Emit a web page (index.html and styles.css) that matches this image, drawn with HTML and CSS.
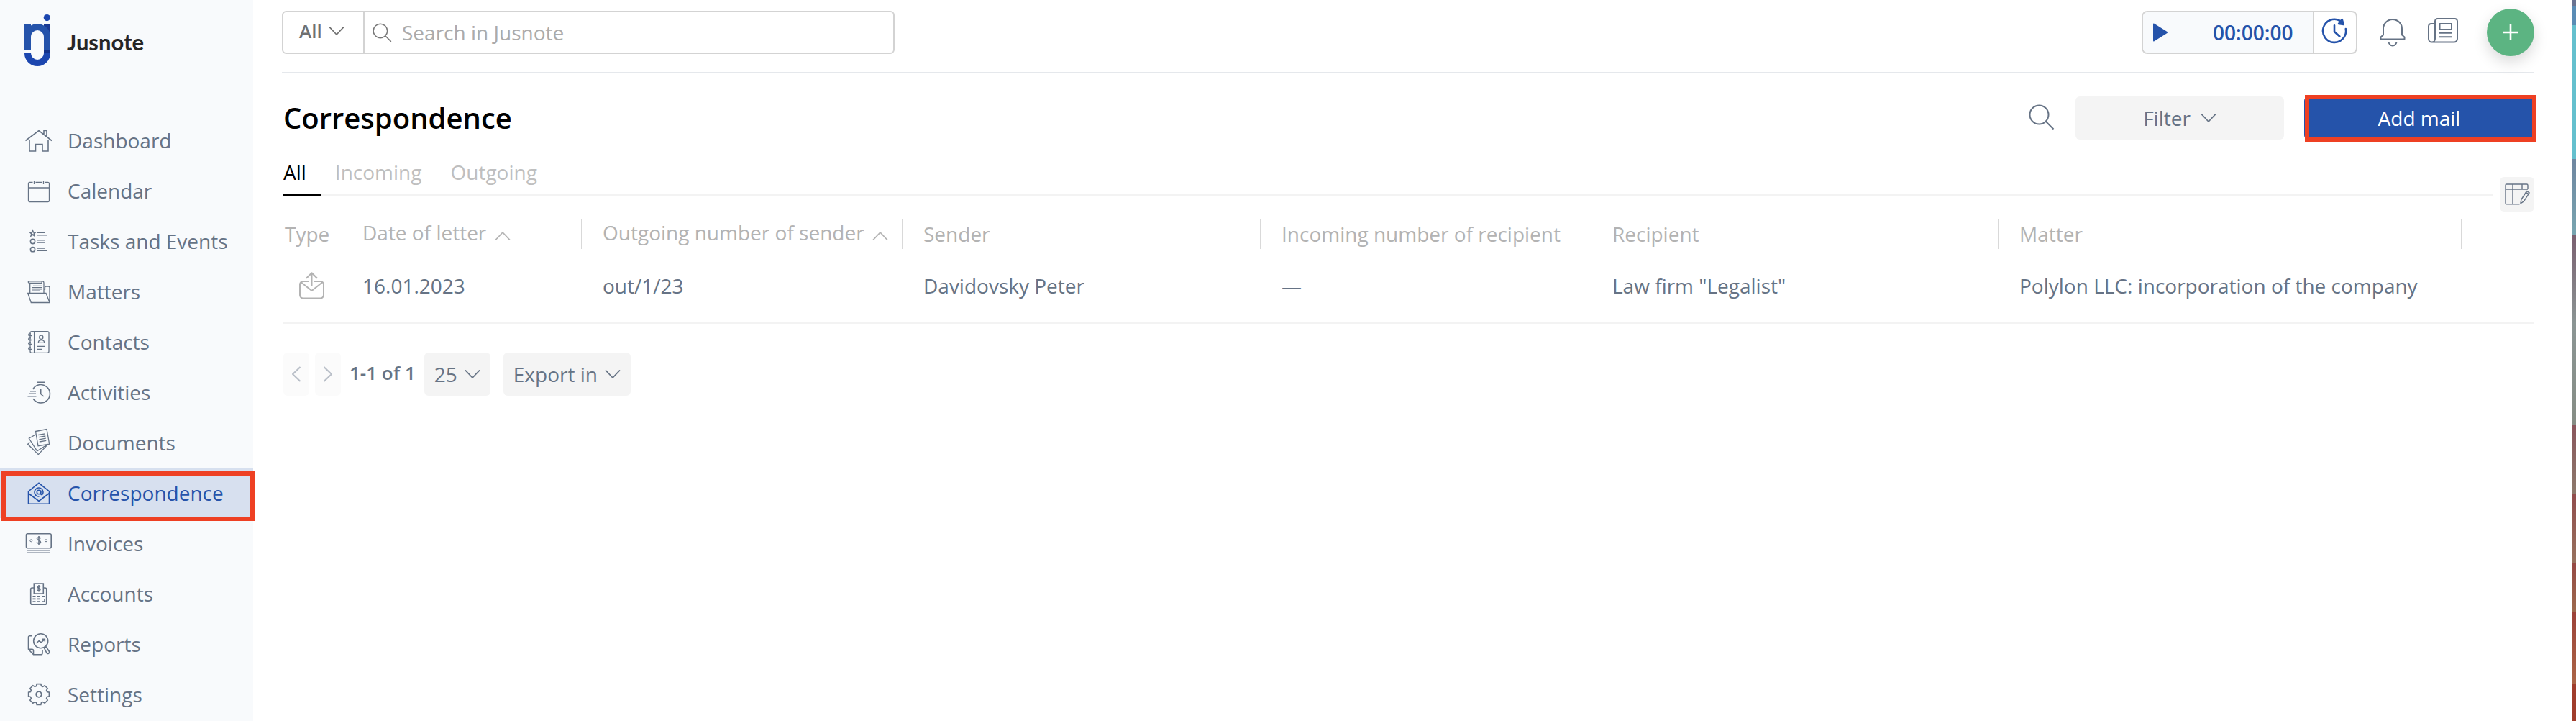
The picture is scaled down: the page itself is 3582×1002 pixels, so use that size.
FILE: index.html
```html
<!DOCTYPE html>
<html lang="en">

<head>
    <meta charset="UTF-8">
    <meta name="viewport" content="width=device-width, initial-scale=1.0">
    <title>Correspondence - Jusnote</title>
    <link rel="stylesheet" href="styles.css">
</head>

<body>
    <aside class="sidebar">
        <a class="logo">
            <svg class="logo-mark" viewBox="0 0 36 72">
                <circle cx="31.3" cy="4.6" r="4.6" fill="#1c46af" />
                <path d="M0 54h9a9 9 0 0 0 18 0v-4h9v4a18 18 0 0 1-36 0z" fill="#1c46af" />
                <path d="M27 13.5h9V50h-9z" fill="#2553aa" />
                <path d="M27 13.5h9V30a18 18 0 0 0-9-14z" fill="#1a3a94" />
                <path d="M0 13.5h9v2A18 18 0 0 1 36 31v19h-9V31a9 9 0 0 0-18 0v18.5H0z" fill="#2553aa" />
                <path d="M27 50h9v4h-9z" fill="#14328a" />
            </svg>
            <span class="logo-text">Jusnote</span>
        </a>
        <nav class="menu">
            <a class="menu-item">
                <svg viewBox="0 0 40 40"><path d="M1.5 20.5L20 6.5l18 14M7 19v16h8.5v-9.5H25V35h8V19M27 11V6.5h4V15" /></svg>
                Dashboard
            </a>
            <a class="menu-item">
                <svg class="thin" viewBox="0 0 40 40"><path d="M11.5 8.5h-4a2 2 0 0 0-2 2v23a2 2 0 0 0 2 2h25a2 2 0 0 0 2-2v-23a2 2 0 0 0-2-2h-4M15.5 8.5h9M5.5 16h29M13.5 6v5M26.5 6v5" /></svg>
                Calendar
            </a>
            <a class="menu-item">
                <svg viewBox="0 0 40 40"><path d="M11.5 5.5l1 2.5h2.7l-2 1.900.7 2.9-2.4-1.7-2.4 1.7.7-2.9-2-1.9h2.7zM18 8.300h10M18 11.700h14M18 18.700h10M18 22h10M18 30h10M18 33.300h14" /><circle cx="11.5" cy="20.5" r="3.1" /><circle cx="11.5" cy="31.7" r="3.1" /></svg>
                Tasks and Events
            </a>
            <a class="menu-item">
                <svg class="thin" viewBox="0 0 40 40"><path d="M7.7 22V8.500H24M7.7 8.500C5 8.500 4.500 6 6.500 5.800h18.700M24 8.500c0-3.600 3-3.600 3 0V22M4.700 22.300H30l5 13.200H9.300zM27 17h1.500v-2.500a1.500 1.500 0 0 1 1.500-1.500h3.500a1.500 1.500 0 0 1 1.500 1.500v21M12 12.300h12M10.300 14.600H24M10.300 16.900H24M10.300 19.100h11" /></svg>
                Matters
            </a>
            <a class="menu-item">
                <svg class="thin" viewBox="0 0 40 40"><rect x="8" y="5.7" width="26" height="29.6" rx="2" /><path d="M13.6 5.7v29.6M19.3 21.3c0-5 8.4-5 8.4 0zM17.7 26.3H29M17.7 30.3H25M11 11.500H7a1.300 1.300 0 0 1 0-2.700h2M11 17.500H7a1.300 1.300 0 0 1 0-2.700h2M11 23.500H7a1.300 1.300 0 0 1 0-2.700h2M11 30.500H7a1.300 1.300 0 0 1 0-2.700h2" /><circle cx="23.3" cy="13.7" r="2.6" /></svg>
                Contacts
            </a>
            <a class="menu-item">
                <svg viewBox="0 0 40 40"><path d="M11.7 16a12.7 12.7 0 1 1 .5 13.3M17 6.3h11M8 18.7h8M6.3 22.3H16M4.5 25.7h12M22.7 16v6.5l4 3.5" /></svg>
                Activities
            </a>
            <a class="menu-item">
                <svg class="thin" viewBox="0 0 40 40"><path d="M15.5 4.5l15.5-3 3.7 20.7L19 24.700zM19.300 9.500l9.500-1.700M19.800 12.700l9.500-1.700M20.300 15.800l9.500-1.700M20.800 19l9.500-1.700M15.500 9l-9.200 5.300 11.300 17.500L30 24M7 19l-2.300 3.300 14.600 14.300 11.700-12.300" /></svg>
                Documents
            </a>
            <a class="menu-item active">
                <svg viewBox="0 0 40 40"><path d="M5.5 18L20 6.3 34.5 18v17.3h-29zM5.5 20.5L20 31.5l14.5-11M22.7 16.5V21c0 2.5 3.3 2 3.3-2a6 6 0 1 0-5.5 6" /><circle cx="20" cy="19" r="2.7" /></svg>
                Correspondence
            </a>
            <a class="menu-item">
                <svg viewBox="0 0 40 40"><rect x="2.5" y="6.7" width="34.7" height="20" rx="2" /><path d="M3 29.8h33M3 33.3h33M22.5 13.3c-1-2-5-1.8-5 .5s5 2 5 4.5-4.5 2.5-5.3.3M20 10v12" /><circle cx="9.3" cy="16.3" r="1.5" stroke-width="1" /><circle cx="30" cy="16.3" r="1.5" stroke-width="1" /></svg>
                Invoices
            </a>
            <a class="menu-item">
                <svg viewBox="0 0 40 40"><path d="M13.3 12h-2.6a2 2 0 0 0-2 2v19.3a2 2 0 0 0 2 2h18a2 2 0 0 0 2-2V14a2 2 0 0 0-2-2h-2.3M13.3 6h13v14h-13zM22 10.5c-1-1.5-4-1.3-4 .5s4 1.4 4 3.2-3.3 2-4.2.3M20 8v9.5M11.5 23.7h4M18 23.7h4M24.5 23.7h4M11.5 27.4h4M18 27.4h4M11.5 31h4M18 31h4M28 27v4h-3.5" /></svg>
                Accounts
            </a>
            <a class="menu-item">
                <svg viewBox="0 0 40 40"><circle cx="22.7" cy="15.7" r="10" /><path d="M11 8.7H7.500a2 2 0 0 0-2 2v16.600l7 7.500h10.500a2 2 0 0 0 2-2V29M5.500 27.300h5a2 2 0 0 1 2 2v5.500M16.500 19l3.800-3.500 3 2.300 5-4.500M25 13.200h3.300v3.300M27.500 25.500l2.800-1.500 4.200 6.500c1 2-2 4-3.500 2z" /></svg>
                Reports
            </a>
            <a class="menu-item">
                <svg viewBox="-20 -20 40 40"><path d="M14.4-2.8V2.8L11.5 3.5 10.6 5.6 12.2 8.2 8.2 12.2 5.6 10.6 3.5 11.5 2.8 14.4H-2.8L-3.5 11.5-5.6 10.6-8.2 12.2-12.2 8.2-10.6 5.6-11.5 3.5-14.4 2.8V-2.8L-11.5-3.5-10.6-5.6-12.2-8.2-8.2-12.2-5.6-10.6-3.5-11.5-2.8-14.4H2.8L3.5-11.5 5.6-10.6 8.2-12.2 12.2-8.2 10.6-5.6 11.5-3.500z" /><circle r="3.8" stroke-width="1.8" /></svg>
                Settings
            </a>
        </nav>
    </aside>

    <main class="content">
        <header class="topbar">
            <div class="search">
                <div class="search-type">
                    All
                    <svg class="chevron" viewBox="0 0 22 12"><path d="M1 .5l10 10.5L21 .5" /></svg>
                </div>
                <div class="search-field">
                    <svg class="search-icon" viewBox="0 0 36 36"><circle cx="14.5" cy="14.5" r="13" /><path d="M24 24l10.5 10.5" /></svg>
                    <span>Search in Jusnote</span>
                </div>
            </div>
            <div class="tools">
                <div class="timer">
                    <div class="timer-main">
                        <svg class="play" viewBox="0 0 22 26"><path d="M1 1.500Q1 0 2.500.8L20.500 12q1.500 1 0 2L2.500 25.200Q1 26 1 24.500z" /></svg>
                        <span>00:00:00</span>
                    </div>
                    <div class="timer-history">
                        <svg viewBox="0 0 36 36"><path d="M33.8 15A16 16 0 1 1 26 4M18 10.300V19l7.300 6.500" /><path class="fill" d="M24 8l6.700 1-2-7z" /></svg>
                    </div>
                </div>
                <svg class="bell" viewBox="0 0 36 40"><path d="M1.500 29.500v-3l3.500-3V15a13 13 0 0 1 26 0v8.500l3.500 3v3zM12.500 33a5.500 5.500 0 0 0 11 0" /></svg>
                <svg class="news" viewBox="0 0 42 36"><path d="M10 8H4.500A3.500 3.500 0 0 0 1 11.500V29a4.500 4.500 0 0 0 4.500 4.500h31A4.500 4.500 0 0 0 41 29V4.500A3.500 3.500 0 0 0 37.500 1h-24A3.500 3.500 0 0 0 10 4.500V29a4.500 4.500 0 0 1-4.500 4.500M16.500 8h16.500v8H16.500zM15.500 20.700h18.500M15.500 26.200h18.500" /></svg>
                <button class="add-button">
                    <svg viewBox="0 0 24 24"><path d="M12 1v22M1 12h22" /></svg>
                </button>
            </div>
        </header>

        <div class="page-head">
            <h1>Correspondence</h1>
            <div class="actions">
                <svg class="find" viewBox="0 0 36 36"><circle cx="14.5" cy="14.5" r="13" /><path d="M24 24l10.5 10.5" /></svg>
                <button class="filter-button">
                    Filter
                    <svg class="chevron" viewBox="0 0 22 12"><path d="M1 .5l10 10.5L21 .5" /></svg>
                </button>
                <button class="mail-button">Add mail</button>
            </div>
        </div>

        <div class="tabs-row">
            <div class="tabs">
                <a class="tab active">All</a>
                <a class="tab">Incoming</a>
                <a class="tab">Outgoing</a>
            </div>
            <button class="columns-button">
                <svg viewBox="0 0 36 32"><path d="M33 9V3.500A1.500 1.500 0 0 0 31.500 2h-28A1.500 1.500 0 0 0 2 3.500v24.700a1.500 1.500 0 0 0 1.500 1.500h18M2 9h31M12 2v27.700M25 2v7M23 28.700l.8-5.200 7.700-12 3.600 2.300-7.700 12zM30.300 13.400l3.600 2.300" /></svg>
            </button>
        </div>

        <section class="table">
            <div class="row head">
                <div>Type</div>
                <div class="sorted">Date of letter <svg class="chevron" viewBox="0 0 22 12"><path d="M1 11.5L11 1l10 10.5" /></svg></div>
                <div class="sorted">Outgoing number of sender <svg class="chevron" viewBox="0 0 22 12"><path d="M1 11.5L11 1l10 10.5" /></svg></div>
                <div>Sender</div>
                <div>Incoming number of recipient</div>
                <div>Recipient</div>
                <div>Matter</div>
                <div></div>
            </div>
            <div class="row">
                <div>
                    <svg class="outgoing-icon" viewBox="0 0 36 38"><path d="M14 13H5.500A4.500 4.500 0 0 0 1 17.500V32a4.500 4.500 0 0 0 4.500 4.500h24A4.500 4.500 0 0 0 34 32V17.500a4.500 4.500 0 0 0-4.500-4.500H21M3 14.500L17.500 26 32 14.500M17.500 19V1.500M10 8.700l7.500-7.500L25 8.700" /></svg>
                </div>
                <div>16.01.2023</div>
                <div>out/1/23</div>
                <div>Davidovsky Peter</div>
                <div>—</div>
                <div>Law firm "Legalist"</div>
                <div>Polylon LLC: incorporation of the company</div>
            </div>
        </section>

        <footer class="pager">
            <button class="page-arrow"><svg viewBox="0 0 12 22"><path d="M11.5 1L1 11l10.5 10" /></svg></button>
            <button class="page-arrow"><svg viewBox="0 0 12 22"><path d="M.5 1L11 11 .5 21" /></svg></button>
            <span class="page-info">1-1 of 1</span>
            <button class="select">25 <svg class="chevron" viewBox="0 0 22 12"><path d="M1 .5l10 10.5L21 .5" /></svg></button>
            <button class="select">Export in <svg class="chevron" viewBox="0 0 22 12"><path d="M1 .5l10 10.5L21 .5" /></svg></button>
        </footer>
    </main>

    <div class="desktop-edge"></div>
</body>

</html>
```
FILE: styles.css
```css
*,
*::after {
    margin: 0;
    padding: 0;
    box-sizing: border-box;
}

body {
    display: flex;
    height: 1002px;
    overflow: hidden;
    background: #fff;
    color: #667385;
    font-family: 'Open Sans', 'Noto Sans', sans-serif;
    font-size: 28px;
    line-height: 38px;
}

svg {
    flex: none;
    fill: none;
    stroke: currentColor;
    stroke-width: 2;
    stroke-linejoin: round;
}

button {
    border: 0;
    color: inherit;
    font: inherit;
}

.chevron {
    width: 22px;
    height: 12px;
    stroke-width: 1.8;
}

/* sidebar */
.sidebar {
    flex: none;
    width: 352px;
    background: #f8fafc;
}

.logo {
    display: flex;
    height: 160px;
    padding: 20px 0 0 34px;
}

.logo-mark {
    width: 36px;
    height: 72px;
    stroke: none;
}

.logo-text {
    margin: 19px 0 0 23px;
    color: #262626;
    font-family: Lato, sans-serif;
    font-size: 31px;
    font-weight: 700;
}

.menu-item {
    display: flex;
    align-items: center;
    height: 70px;
    padding-left: 34px;
    gap: 20px;
}

.menu-item svg {
    width: 40px;
    height: 40px;
    stroke-width: 1.6;
    stroke-linejoin: miter;
}

.menu-item .thin {
    stroke-width: 1.3;
}

.menu-item.active {
    position: relative;
    background: #d7e0ef;
    color: #2553aa;
}

.menu-item.active::after {
    content: '';
    position: absolute;
    top: 5px;
    left: 2px;
    width: 352px;
    height: 69px;
    border: 6px solid #ee4023;
}

/* top bar */
.content {
    flex: 1;
    padding: 0 52px 0 42px;
}

.topbar {
    display: flex;
    justify-content: space-between;
    height: 102px;
    margin-left: -2px;
    border-bottom: 2px solid #e5e8ec;
}

.search {
    display: flex;
    width: 852px;
    height: 60px;
    margin-top: 15px;
    border: 2px solid #d3d3d3;
    border-radius: 6px;
}

.search-type {
    display: flex;
    align-items: center;
    width: 113px;
    padding: 0 0 4px 22px;
    gap: 9px;
    border-right: 2px solid #d3d3d3;
    color: #707070;
    font-size: 26px;
    font-weight: 600;
}

.search-field {
    display: flex;
    align-items: center;
    padding-left: 11px;
    gap: 14px;
    color: #ababab;
}

.search-icon {
    width: 27px;
    height: 27px;
    color: #777;
}

.tools {
    display: flex;
    align-items: flex-start;
}

.timer {
    display: flex;
    width: 300px;
    height: 60px;
    margin-top: 15px;
    border: 2px solid #d3d3d3;
    border-radius: 8px;
    color: #2553aa;
}

.timer-main {
    display: flex;
    align-items: center;
    width: 238px;
    padding-left: 13px;
    gap: 62px;
    border-right: 2px solid #d3d3d3;
    border-radius: 6px 0 0 6px;
    background: #f8fafc;
    font-weight: 600;
}

.play {
    width: 22px;
    height: 26px;
    fill: currentColor;
    stroke: none;
}

.timer-history svg {
    width: 36px;
    height: 36px;
    margin: 8px 0 0 10px;
    stroke-width: 2.6;
    stroke-linecap: round;
}

.fill {
    fill: currentColor;
}

.bell {
    width: 36px;
    height: 40px;
    margin: 25px 0 0 31px;
}

.news {
    width: 42px;
    height: 36px;
    margin: 25px 0 0 31px;
}

.add-button {
    display: flex;
    align-items: center;
    justify-content: center;
    width: 66px;
    height: 66px;
    margin: 12px 0 0 40px;
    border-radius: 50%;
    background: #5cb482;
    box-shadow: 0 8px 20px rgba(0, 0, 0, 0.15);
    color: #fff;
}

.add-button svg {
    width: 24px;
    height: 24px;
    stroke-width: 2.6;
}

/* page heading */
.page-head {
    display: flex;
    justify-content: space-between;
    height: 124px;
    padding-top: 32px;
}

h1 {
    height: 60px;
    color: #000;
    font-size: 40px;
    font-weight: 600;
    line-height: 60px;
}

.actions {
    display: flex;
}

.find {
    width: 36px;
    height: 36px;
    margin: 11px 29px 0 0;
}

.filter-button {
    display: flex;
    align-items: center;
    justify-content: center;
    width: 290px;
    height: 60px;
    margin-right: 28px;
    gap: 14px;
    border-radius: 6px;
    background: #f4f4f4;
}

.mail-button {
    position: relative;
    width: 320px;
    height: 60px;
    border-radius: 6px;
    background: #2553aa;
    color: #fff;
}

.mail-button::after {
    content: '';
    position: absolute;
    top: -2px;
    left: 1px;
    width: 322px;
    height: 65px;
    border: 6px solid #ee4023;
}

/* tabs */
.tabs-row {
    display: flex;
    gap: 10px;
    height: 78px;
}

.tabs {
    display: flex;
    flex: 1;
    height: 46px;
    gap: 20px;
    border-bottom: 2px solid #f3f3f3;
}

.tab {
    height: 46px;
    padding: 0 20px 0 0;
    color: #bfbfbf;
    line-height: 26px;
}

.tab.active {
    border-bottom: 2px solid #000;
    color: #000;
}

.columns-button {
    display: flex;
    align-items: center;
    justify-content: center;
    width: 48px;
    height: 48px;
    margin-top: 20px;
    border-radius: 6px;
    background: #f4f4f4;
}

.columns-button svg {
    width: 36px;
    height: 32px;
    stroke-width: 1.4;
}

/* table */
.row {
    display: grid;
    grid-template-columns: 80px 334px 446px 498px 460px 566px 644px 102px;
    height: 104px;
    padding-top: 32px;
    border-bottom: 2px solid #f3f3f3;
}

.row > div {
    height: 42px;
    padding-left: 30px;
    white-space: nowrap;
}

.row > div:first-child {
    padding-left: 2px;
}

.row.head {
    height: 42px;
    padding-top: 0;
    border: 0;
    color: #b3b3b3;
}

.head > div {
    padding-top: 2px;
}

.head > .sorted {
    padding-top: 0;
}

.head > div:nth-child(n + 3) {
    padding-left: 29px;
    border-left: 1px solid #d9d9d9;
}

.sorted .chevron {
    margin-left: 4px;
}

.outgoing-icon {
    display: block;
    width: 36px;
    height: 38px;
    margin-left: 20px;
    color: #b3b3b3;
}

/* pagination */
.pager {
    display: flex;
    padding-top: 40px;
}

.page-arrow {
    width: 36px;
    height: 60px;
    margin-right: 8px;
    border-radius: 6px;
    background: #fbfbfb;
    color: #b9bfc8;
}

.page-arrow svg {
    width: 12px;
    height: 22px;
}

.page-info {
    margin: 9px 12px 0 4px;
    font-size: 26px;
    font-weight: 600;
}

.select {
    display: flex;
    align-items: center;
    height: 60px;
    margin-right: 18px;
    padding: 0 14px;
    gap: 10px;
    border-radius: 6px;
    background: #f4f4f4;
}

/* strip of the desktop behind the window */
.desktop-edge {
    flex: none;
    width: 6px;
    background: linear-gradient(#6a7391 0 9px, #5a8cb5 9px 35px, #64c0ce 35px 221px, #6f86a0 221px, #78a5b0 327px, #7a6070 327px, #8b9594 450px, #868d85 590px, #8a555c 590px, #8c7a6c 686px, #914c4c 686px, #97735f 783px, #964944 783px, #9c6a4d 850px, #9c4138 850px, #ab6647 950px, #a03d2c 950px);
}
```
